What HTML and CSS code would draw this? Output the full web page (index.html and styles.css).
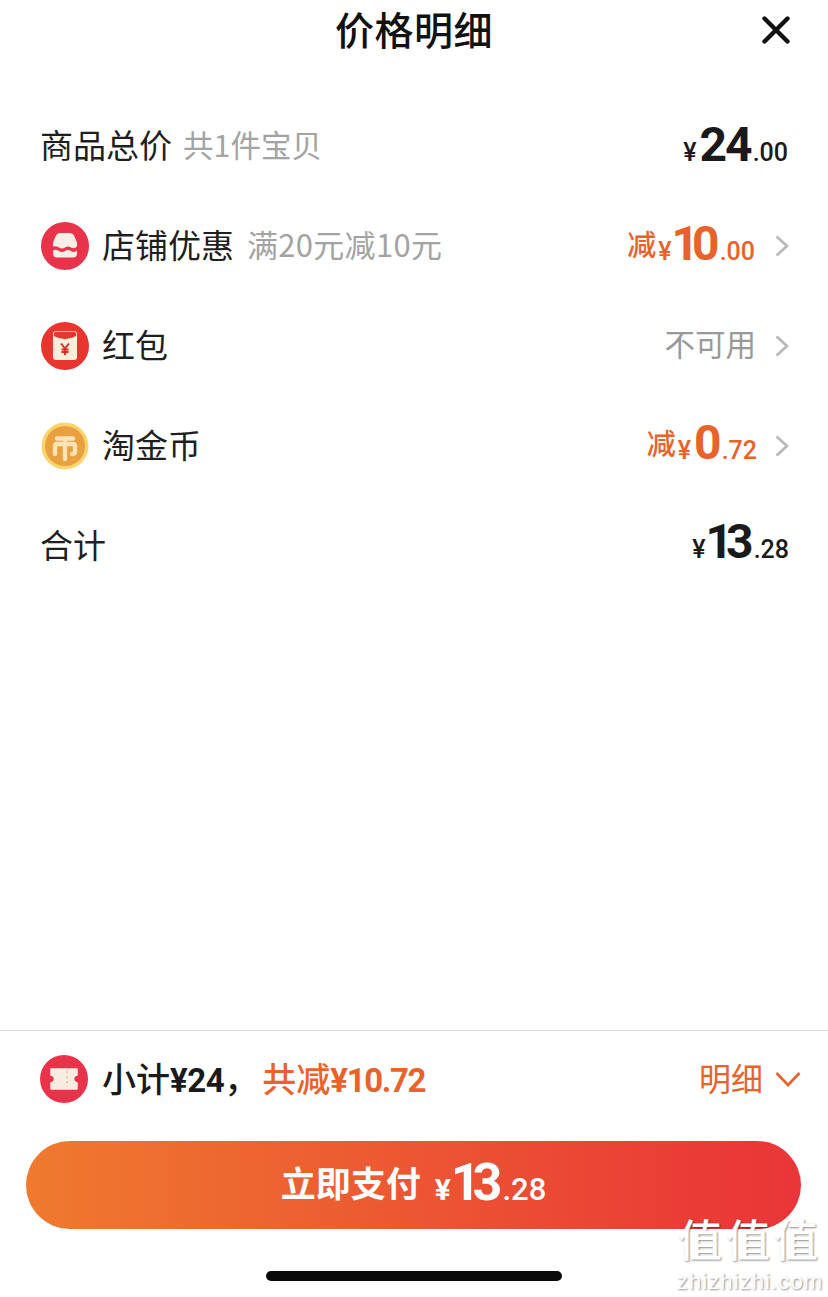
FILE: index.html
```html
<!DOCTYPE html>
<html lang="zh-CN">
<head>
    <meta charset="UTF-8">
    <meta name="viewport" content="width=device-width, initial-scale=1.0">
    <title>价格明细</title>
    <link rel="stylesheet" href="styles.css">
</head>
<body>
    <div class="sheet">
        <header class="sheet-header">
            <h1>价格明细</h1>
            <svg class="close-icon" viewBox="0 0 28 28"><path d="M2.5 2.5 L25.5 25.5 M25.5 2.5 L2.5 25.5" /></svg>
        </header>

        <div class="price-list">
            <div class="price-row">
                <span class="row-label">商品总价</span>
                <span class="row-note">共1件宝贝</span>
                <span class="amount amount-total amount-first"><i>¥</i><b>24</b><em>.00</em></span>
            </div>
            <div class="price-row">
                <svg class="row-icon" viewBox="0 0 48 48">
                    <circle cx="24" cy="24" r="24" fill="#e8334a" />
                    <path d="M19 11 H29 Q32 11 33 13.5 L36 20.5 V24.5 Q33 27.5 30 25.5 Q27 23.5 24 25.5 Q21 27.5 18 25.5 Q15 23.5 12 24.5 V20.5 L15 13.5 Q16 11 19 11 Z" fill="#fbeee6" />
                    <path d="M12 28.5 Q15 27 18 29 Q21 31 24 29 Q27 27 30 29 Q33 31 36 28.5 V31 Q36 35.5 32 35.5 H16 Q12 35.5 12 31 Z" fill="#fbeee6" />
                </svg>
                <span class="row-label">店铺优惠</span>
                <span class="row-note row-note-offer">满20元减10元</span>
                <span class="amount amount-cut"><span class="cut-word">减</span><i>¥</i><b class="lead-one">10</b><em>.00</em></span>
                <svg class="chevron" viewBox="0 0 14 22"><path d="M1.5 1.5 L12 11 L1.5 20.5" /></svg>
            </div>
            <div class="price-row">
                <svg class="row-icon" viewBox="0 0 48 48">
                    <circle cx="24" cy="24" r="24" fill="#e8352e" />
                    <rect x="12" y="9" width="24" height="29" rx="3" fill="#fbeedb" />
                    <path d="M12.8 12 Q12.8 9.8 15 9.8 H33 Q35.2 9.8 35.2 12 V14 Q24 20 12.8 14 Z" fill="#e8352e" />
                    <path d="M20 21.5 L24 26.5 L28 21.5 M24 26.5 V33 M20.5 27.5 H27.5 M20.5 30 H27.5" fill="none" stroke="#dd2c25" stroke-width="1.9" />
                </svg>
                <span class="row-label">红包</span>
                <span class="row-right-text">不可用</span>
                <svg class="chevron" viewBox="0 0 14 22"><path d="M1.5 1.5 L12 11 L1.5 20.5" /></svg>
            </div>
            <div class="price-row">
                <svg class="row-icon" viewBox="0 0 48 48">
                    <circle cx="24" cy="24" r="23.5" fill="#fbd46e" />
                    <circle cx="24" cy="24" r="20" fill="#e9a03f" />
                    <path d="M16 16.5 H32 M24 16.5 V37 M14 32 V24 Q14 22 16 22 H32 Q34 22 34 24 V30 Q34 32 31 32" fill="none" stroke="#fde3b5" stroke-width="4.4" stroke-linecap="round" />
                </svg>
                <span class="row-label">淘金币</span>
                <span class="amount amount-cut amount-coin"><span class="cut-word">减</span><i>¥</i><b>0</b><em>.72</em></span>
                <svg class="chevron" viewBox="0 0 14 22"><path d="M1.5 1.5 L12 11 L1.5 20.5" /></svg>
            </div>
            <div class="price-row">
                <span class="row-label">合计</span>
                <span class="amount amount-total amount-sum"><i>¥</i><b class="lead-one">13</b><em>.28</em></span>
            </div>
        </div>

        <footer class="sheet-footer">
            <div class="summary">
                <svg class="row-icon" viewBox="0 0 48 48">
                    <circle cx="24" cy="24" r="24" fill="#e8334a" />
                    <path d="M11 14 H37 V20 Q33.5 21 33.5 24 Q33.5 27 37 28 V34 H11 V28 Q14.5 27 14.5 24 Q14.5 21 11 20 Z" fill="#f9ece0" stroke="#f9ece0" stroke-width="1.5" stroke-linejoin="round" />
                    <path d="M27 16 V32" stroke="#f0c9a8" stroke-width="1.6" stroke-dasharray="2.5 2.5" />
                </svg>
                <span class="summary-text">小计<span class="summary-num">¥24</span>，</span>
                <span class="summary-cut">共减<span class="summary-num">¥10.72</span></span>
                <span class="summary-detail">明细</span>
                <svg class="chevron-down" viewBox="0 0 26 16"><path d="M1.5 2 L13 14 L24.5 2" /></svg>
            </div>
            <button class="pay-button"><span class="pay-label">立即支付</span><span class="pay-amount"><i>¥</i><b>13</b><em>.28</em></span></button>
            <div class="home-bar"></div>
        </footer>
    </div>

    <div class="watermark">
        <div class="watermark-big">值值值</div>
        <div class="watermark-small">zhizhizhi.com</div>
    </div>
</body>
</html>
```

FILE: styles.css
```css
* {
    box-sizing: border-box;
}
body {
    margin: 0;
    background-color: #fff;
    color: #1a1a1a;
    font-family: "Noto Sans CJK SC", "Noto Sans", sans-serif;
}
.sheet {
    height: 1297px;
    display: flex;
    flex-direction: column;
    overflow: hidden;
}
.sheet-header {
    height: 60px;
    display: flex;
    align-items: center;
    justify-content: center;
    position: relative;
}
.sheet-header h1 {
    margin: 0 0 4px;
    font-size: 39px;
    font-weight: 500;
    letter-spacing: 0.5px;
    line-height: 54px;
    color: #111;
}
.close-icon {
    position: absolute;
    left: 762px;
    top: 16px;
    width: 28px;
    height: 28px;
}
.close-icon path {
    fill: none;
    stroke: #111;
    stroke-width: 4.4;
    stroke-linecap: round;
}
.price-list {
    padding: 36px 38px 0 40px;
}
.price-row {
    height: 100px;
    display: flex;
    align-items: center;
}
.row-icon {
    width: 48px;
    height: 48px;
    flex: none;
    margin: 0 13px 0 1px;
}
.row-label {
    margin-bottom: 5px;
    font-size: 33px;
    font-weight: 400;
    color: #1f1f1f;
    white-space: nowrap;
}
.row-note {
    margin: 0 0 5px 11px;
    font-size: 30.5px;
    color: #a3a3a3;
    white-space: nowrap;
}
.row-note-offer {
    margin-left: 13px;
    font-size: 31px;
    letter-spacing: 0.3px;
}
.row-right-text {
    margin: 0 -1px 7px auto;
    font-size: 30.5px;
    color: #999;
}
.amount {
    margin-left: auto;
    margin-bottom: 3px;
    display: flex;
    align-items: baseline;
    font-family: Roboto, "Noto Sans CJK SC", sans-serif;
    line-height: 1;
}
.amount i {
    font-style: normal;
    font-weight: 500;
    font-size: 25px;
}
.amount b {
    font-weight: 700;
    font-size: 48px;
    letter-spacing: -2px;
    margin: 0 2px 0 3px;
}
.amount b.lead-one {
    letter-spacing: -7px;
    margin: 0 7px 0 0;
}
.amount em {
    font-style: normal;
    font-weight: 500;
    font-size: 25px;
}
.amount-total {
    color: #1a1a1a;
}
.amount-first {
    margin-right: 2px;
}
.amount-sum {
    margin-right: 1px;
    margin-bottom: 9px;
}
.amount-cut {
    color: #e9622a;
    margin-bottom: 5px;
}
.amount-coin {
    margin-right: -2px;
    margin-bottom: 7px;
}
.cut-word {
    align-self: center;
    font-family: "Noto Sans CJK SC", sans-serif;
    font-size: 29px;
    font-weight: 500;
    margin-right: 2px;
}
.chevron {
    width: 14px;
    height: 22px;
    margin: 0 1px 0 20px;
    flex: none;
}
.chevron path {
    fill: none;
    stroke: #b8b8b8;
    stroke-width: 2.6;
}
.sheet-footer {
    margin-top: auto;
    border-top: 1px solid #dcdcdc;
    padding: 0 27px 16px 26px;
}
.summary {
    height: 96px;
    padding-left: 14px;
    display: flex;
    align-items: center;
}
.summary .row-icon {
    margin: 0 14px 0 0;
}
.summary-text {
    margin-bottom: 4px;
    font-size: 34px;
    font-weight: 500;
    color: #1a1a1a;
    white-space: nowrap;
}
.summary-cut {
    margin: 0 0 4px 4px;
    font-size: 34px;
    font-weight: 500;
    color: #e9622a;
    white-space: nowrap;
}
.summary-num {
    font-family: Roboto, sans-serif;
    font-size: 33px;
    font-weight: 700;
    letter-spacing: -1.4px;
}
.summary-text .summary-num {
    letter-spacing: -0.4px;
}
.summary-detail {
    margin: 0 0 4px auto;
    font-size: 32px;
    color: #e9622a;
}
.chevron-down {
    width: 26px;
    height: 16px;
    margin-left: 12px;
}
.chevron-down path {
    fill: none;
    stroke: #e9622a;
    stroke-width: 2.6;
}
.pay-button {
    display: flex;
    align-items: center;
    justify-content: center;
    width: 775px;
    height: 88px;
    margin-top: 14px;
    padding: 0;
    border: none;
    border-radius: 44px;
    background: linear-gradient(90deg, #ef7a2e 0%, #ea3d36 85%, #ea3538 100%);
    color: #fff;
    font-family: "Noto Sans CJK SC", sans-serif;
    font-size: 35px;
    font-weight: 700;
    line-height: 1;
}
.pay-label {
    margin-bottom: 8px;
}
.pay-amount {
    display: flex;
    align-items: baseline;
    margin: 0 0 4px 14px;
    font-family: Roboto, sans-serif;
}
.pay-amount i {
    font-style: normal;
    font-size: 30px;
    font-weight: 700;
}
.pay-amount b {
    font-size: 52px;
    font-weight: 700;
    letter-spacing: -8px;
    margin-right: 8px;
}
.pay-amount em {
    font-style: normal;
    font-size: 31px;
    font-weight: 500;
}
.home-bar {
    width: 296px;
    height: 10px;
    margin: 42px 0 0 240px;
    border-radius: 5px;
    background-color: #0a0a0a;
}
.watermark {
    position: absolute;
    left: 675px;
    top: 1207px;
    width: 150px;
    color: #fff;
    text-align: center;
    text-shadow: 1px 1px 2px rgba(0,0,0,0.45);
}
.watermark-big {
    font-size: 44px;
    font-weight: 500;
    letter-spacing: 4px;
    line-height: 62px;
    white-space: nowrap;
}
.watermark-small {
    font-family: "Liberation Sans", sans-serif;
    font-size: 22px;
    letter-spacing: 1.1px;
    line-height: 25px;
    white-space: nowrap;
}
```
